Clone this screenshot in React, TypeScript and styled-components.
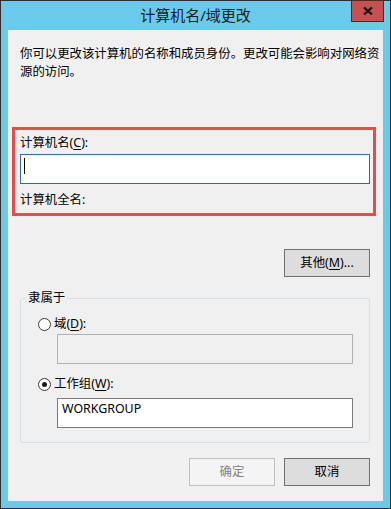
import React from "react";
import styled, { createGlobalStyle } from "styled-components";

const GlobalStyle = createGlobalStyle`
  html, body {
    margin: 0;
    padding: 0;
    background: #ffffff;
  }
  body {
    font-family: "Noto Sans", "Noto Sans CJK SC", sans-serif;
    color: #000000;
  }
`;

const Window = styled.div`
  box-sizing: border-box;
  width: 391px;
  height: 509px;
  border: 1px solid #2e2e2e;
  background: #69caea;
  padding: 0 7px 7px 7px;
  display: flex;
  flex-direction: column;
`;

const TitleBar = styled.div`
  height: 29px;
  display: grid;
  grid-template-columns: 1fr auto 1fr;
  align-items: start;
`;

const Title = styled.div`
  grid-column: 2;
  font-family: "Noto Sans", "Noto Sans CJK SC", sans-serif;
  font-size: 15px;
  line-height: 29px;
  color: #1a1a1a;
`;

const CloseButton = styled.div`
  grid-column: 3;
  justify-self: end;
  box-sizing: border-box;
  width: 33px;
  height: 22px;
  margin-top: -1px;
  margin-right: -1px;
  background: #c75050;
  border: 1px solid #4d2a27;
  display: flex;
  align-items: center;
  justify-content: center;
`;

const Client = styled.div`
  flex: 1;
  background: #f0f0f0;
  display: flex;
  flex-direction: column;
  padding-top: 15px;
`;

const Description = styled.p`
  margin: 0 0 0 12px;
  font-size: 12.4px;
  line-height: 18px;
  white-space: nowrap;
`;

const Highlight = styled.div`
  box-sizing: border-box;
  margin: 46px 0 0 4px;
  width: 364px;
  border: 3px solid #e84b4a;
  padding: 4px 3px 4px 5px;
  display: flex;
  flex-direction: column;
`;

const Label = styled.div<{ $top?: number }>`
  font-size: 12.4px;
  line-height: 18px;
  height: 18px;
  margin-top: ${({ $top }) => ($top ? `${$top}px` : "0")};
  white-space: nowrap;
`;

const Key = styled.span`
  text-decoration: underline;
  text-underline-offset: 2px;
`;

const TextBox = styled.div<{ $variant: "focus" | "normal" | "disabled"; $width: number; $left?: number; $top?: number }>`
  box-sizing: border-box;
  width: ${({ $width }) => $width}px;
  height: 30px;
  margin-left: ${({ $left }) => ($left ? `${$left}px` : "0")};
  margin-top: ${({ $top }) => ($top ? `${$top}px` : "0")};
  border: 1px solid
    ${({ $variant }) =>
      $variant === "focus" ? "#2f6c9d" : $variant === "disabled" ? "#adb2b5" : "#7a7a7a"};
  background: ${({ $variant }) => ($variant === "disabled" ? "#f0f0f0" : "#ffffff")};
  padding: 1px 0 0 4px;
  font-size: 12.4px;
  line-height: 18px;
`;

const Caret = styled.div`
  width: 1px;
  height: 16px;
  margin: 2px 0 0 -1px;
  background: #000000;
`;

const ActionRow = styled.div<{ $top: number }>`
  display: flex;
  justify-content: flex-end;
  gap: 9px;
  margin-top: ${({ $top }) => $top}px;
  padding-right: 13px;
`;

const Button = styled.div<{ $disabled?: boolean }>`
  box-sizing: border-box;
  width: 86px;
  height: 28px;
  border: 1px solid ${({ $disabled }) => ($disabled ? "#bfbfbf" : "#707070")};
  background: ${({ $disabled }) => ($disabled ? "#f4f4f4" : "#dddddd")};
  color: ${({ $disabled }) => ($disabled ? "#838383" : "#000000")};
  font-size: 12.4px;
  line-height: 18px;
  display: flex;
  align-items: center;
  justify-content: center;
`;

const Group = styled.fieldset`
  box-sizing: border-box;
  margin: 13px 0 0 12px;
  width: 350px;
  padding: 0;
  border: 1px solid #d5dfe5;
  border-radius: 3px;
  min-inline-size: 0;
`;

const Legend = styled.legend`
  margin-left: 5px;
  padding: 0 2px;
  font-size: 12.4px;
  line-height: 16px;
`;

const GroupBody = styled.div`
  display: flex;
  flex-direction: column;
  padding: 9px 0 14px 17px;
`;

const RadioRow = styled.div<{ $top?: number }>`
  display: flex;
  align-items: center;
  gap: 3px;
  height: 18px;
  margin-top: ${({ $top }) => ($top ? `${$top}px` : "0")};
`;

const Radio = styled.div<{ $checked?: boolean }>`
  box-sizing: border-box;
  width: 13px;
  height: 13px;
  border-radius: 50%;
  border: 1px solid #3d3d3d;
  background: #ffffff;
  display: flex;
  align-items: center;
  justify-content: center;

  &::after {
    content: "";
    display: ${({ $checked }) => ($checked ? "block" : "none")};
    width: 5px;
    height: 5px;
    border-radius: 50%;
    background: #1c1c1c;
  }
`;

export default function App() {
  return (
    <>
      <GlobalStyle />
      <Window>
        <TitleBar>
          <Title>计算机名/域更改</Title>
          <CloseButton>
            <svg width="10" height="8" viewBox="0 0 10 8">
              <path d="M1 0.5 L9 7.5 M9 0.5 L1 7.5" stroke="#111" strokeWidth="2.2" />
            </svg>
          </CloseButton>
        </TitleBar>
        <Client>
          <Description>
            你可以更改该计算机的名称和成员身份。更改可能会影响对网络资
            <br />
            源的访问。
          </Description>

          <Highlight>
            <Label>
              计算机名(<Key>C</Key>):
            </Label>
            <TextBox $variant="focus" $width={350} $top={2}>
              <Caret />
            </TextBox>
            <Label $top={7}>计算机全名:</Label>
          </Highlight>

          <ActionRow $top={33}>
            <Button>
              其他(<Key>M</Key>)...
            </Button>
          </ActionRow>

          <Group>
            <Legend>隶属于</Legend>
            <GroupBody>
              <RadioRow>
                <Radio />
                <Label>
                  域(<Key>D</Key>):
                </Label>
              </RadioRow>
              <TextBox $variant="disabled" $width={296} $left={19} $top={1} />
              <RadioRow $top={11}>
                <Radio $checked />
                <Label>
                  工作组(<Key>W</Key>):
                </Label>
              </RadioRow>
              <TextBox $variant="normal" $width={296} $left={19} $top={5}>
                WORKGROUP
              </TextBox>
            </GroupBody>
          </Group>

          <ActionRow $top={15}>
            <Button $disabled>确定</Button>
            <Button>取消</Button>
          </ActionRow>
        </Client>
      </Window>
    </>
  );
}
